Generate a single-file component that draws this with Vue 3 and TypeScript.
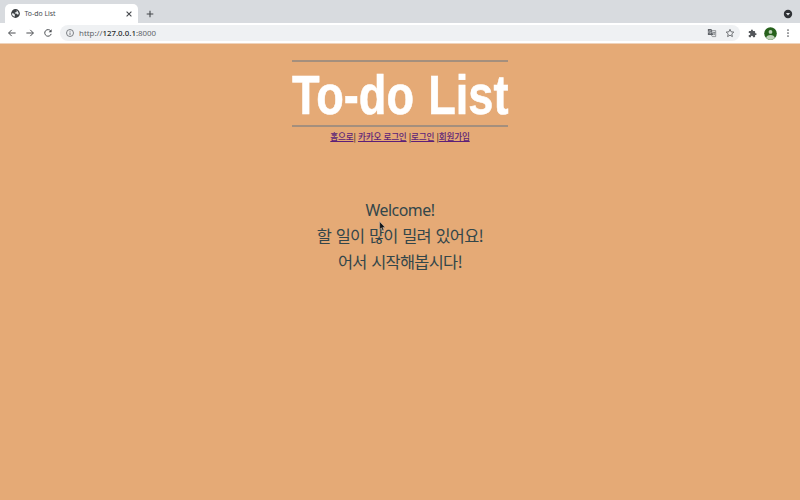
<script setup lang="ts">
interface NavLink {
  label: string
  separator: string
}

const address = { scheme: 'http://', host: '127.0.0.1', port: ':8000' }
const title = 'To-do List'
const links: NavLink[] = [
  { label: '홈으로', separator: '| ' },
  { label: '카카오 로그인', separator: ' |' },
  { label: '로그인', separator: ' |' },
  { label: '회원가입', separator: '' },
]
const messages: string[] = ['할 일이 많이 밀려 있어요!', '어서 시작해봅시다!']
</script>

<template>
  <div class="browser">
    <div class="tabs">
      <div class="tab">
        <svg class="globe" viewBox="0 0 16 16">
          <circle cx="8" cy="8" r="7.8" fill="#3c4043" />
          <path d="M1.5 7.5 5 8l2 2-.4 3.7C3.500 13 1.500 10.500 1.500 7.500zM9 2l1.500 1.600-1.200 2.200-2.500.3.2 1.700 2.500.1 1.500 1.800 2.900-.2C13.500 5.500 12 3 9 2z" fill="#eef0f2" />
        </svg>
        <span class="tab-title">{{ title }}</span>
        <svg class="close" viewBox="0 0 8 8"><path d="M1.600 1.600l4.800 4.800M6.400 1.600L1.600 6.400" /></svg>
      </div>
      <svg class="plus" viewBox="0 0 8 8"><path d="M4 .7v6.600M.7 4h6.600" /></svg>
      <svg class="tab-search" viewBox="0 0 10 10">
        <circle cx="5" cy="5" r="4.200" fill="#303236" />
        <path d="M2.900 3.900h4.200L5 6.500z" fill="#e5e7e9" />
      </svg>
    </div>

    <div class="toolbar">
      <svg class="nav-icon" viewBox="0 0 10 10"><path d="M8.600 5H1.700M4.700 1.900L1.600 5l3.100 3.100" /></svg>
      <svg class="nav-icon" viewBox="0 0 10 10"><path d="M1.400 5h6.900M5.300 1.900L8.400 5 5.300 8.100" /></svg>
      <svg class="nav-icon" viewBox="0 0 10 10">
        <path d="M7.800 3.100A3.300 3.300 0 1 0 8.200 5.900" />
        <path class="arrowhead" d="M8.600 1.200v3H5.600z" />
      </svg>
      <div class="address">
        <svg class="info" viewBox="0 0 10 10"><circle cx="5" cy="5" r="3.500" /><path d="M5 4.500V7M5 2.900v.8" /></svg>
        <span class="url">{{ address.scheme }}<b>{{ address.host }}</b>{{ address.port }}</span>
        <svg class="translate" viewBox="0 0 10 10">
          <path d="M4.400 2.600h4.300v6H5.300L4.400 7z" fill="#e8eaec" stroke="#74777b" stroke-width=".7" />
          <path d="M.9 1h3.600l1.700 6H.9z" fill="#5f6368" />
          <path d="M4.100 3.200A1.300 1.300 0 1 0 4.300 4.300H3" fill="none" stroke="#dadde0" stroke-width=".6" />
          <path d="M6 4.500h2.200M7.100 3.900v.6M7.900 4.500L6.500 7M6.400 5.400l1.500 1.500" fill="none" stroke="#66696d" stroke-width=".6" />
        </svg>
        <svg class="star" viewBox="0 0 10 10"><path d="M5 1.300l1.100 2.500 2.700.3-2 1.800.6 2.700L5 7.200 2.600 8.600l.6-2.700-2-1.800 2.700-.3z" /></svg>
      </div>
      <svg class="puzzle" viewBox="0 0 24 24">
        <path d="M20.500 11H19V7a2 2 0 0 0-2-2h-4V3.500a2.500 2.500 0 0 0-5 0V5H4a2 2 0 0 0-2 2v3.800h1.500a2.700 2.700 0 0 1 0 5.400H2V20a2 2 0 0 0 2 2h3.800v-1.500a2.700 2.700 0 0 1 5.400 0V22H17a2 2 0 0 0 2-2v-4h1.500a2.500 2.500 0 0 0 0-5z" />
      </svg>
      <svg class="avatar" viewBox="0 0 13 13">
        <circle cx="6.500" cy="6.500" r="6.300" fill="#27611c" />
        <circle cx="6.500" cy="4.900" r="1.900" fill="#bed1b8" />
        <path d="M2.200 10.900c0-4 8.600-4 8.600 0a6.200 6.200 0 0 1-8.600 0z" fill="#bed1b8" />
      </svg>
      <svg class="more" viewBox="0 0 4 10"><circle cx="2" cy="2" r=".85" /><circle cx="2" cy="5" r=".85" /><circle cx="2" cy="8" r=".85" /></svg>
    </div>

    <main class="page">
      <h1 class="heading">
        <svg viewBox="0 0 216 63">
          <text x="0" y="52.300" textLength="216.500" lengthAdjust="spacingAndGlyphs">{{ title }}</text>
        </svg>
      </h1>
      <nav class="links">
        <template v-for="link in links" :key="link.label"><a href="#">{{ link.label }}</a><span>{{ link.separator }}</span></template>
      </nav>
      <section class="welcome">
        <p class="greeting">Welcome!</p>
        <p v-for="message in messages" :key="message">{{ message }}</p>
      </section>
      <svg class="cursor" viewBox="0 0 7 11">
        <path d="M.6.600v8l1.800-1.700 1.200 2.900 1.400-.6-1.200-2.800h2.400z" fill="#111417" stroke="#d9c9bb" stroke-width=".5" />
      </svg>
    </main>
  </div>
</template>

<style>
body {
  margin: 0;
}
</style>

<style scoped>
.browser {
  position: relative;
  width: 800px;
  height: 500px;
  overflow: hidden;
  display: flex;
  flex-direction: column;
  background: #e5aa76;
  font-family: "Liberation Sans", "Noto Sans CJK KR", sans-serif;
}
svg {
  display: block;
  flex: none;
}
.tabs {
  height: 23px;
  flex: none;
  display: flex;
  align-items: center;
  box-sizing: border-box;
  padding: 4px 7px 0 5px;
  background: #d8dbdf;
}
.tab {
  width: 133px;
  height: 19px;
  box-sizing: border-box;
  display: flex;
  align-items: center;
  padding: 0 5px 0 6px;
  border-radius: 5px 5px 0 0;
  background: #fff;
}
.globe {
  width: 9px;
  height: 9px;
}
.tab-title {
  flex: 1;
  margin-left: 4.500px;
  font: 6.900px "Noto Sans", sans-serif;
  color: #45494d;
}
.close {
  width: 8px;
  height: 8px;
}
.close path,
.plus path {
  fill: none;
  stroke: #44474b;
  stroke-width: 1.100;
}
.plus {
  width: 8px;
  height: 8px;
  margin-left: 8px;
}
.tab-search {
  width: 10px;
  height: 10px;
  margin-left: auto;
}
.toolbar {
  height: 21px;
  flex: none;
  display: flex;
  align-items: center;
  box-sizing: border-box;
  padding: 0 10px 0 7px;
  background: #fff;
  border-bottom: 1px solid #efd3bb;
}
.nav-icon {
  width: 10px;
  height: 10px;
  margin-right: 8px;
}
.nav-icon path {
  fill: none;
  stroke: #4a4d51;
  stroke-width: 1;
}
.nav-icon .arrowhead {
  fill: #4a4d51;
  stroke: none;
}
.address {
  width: 680px;
  height: 16px;
  margin-left: -1px;
  box-sizing: border-box;
  display: flex;
  align-items: center;
  padding: 0 5px;
  border-radius: 8px;
  background: #eff1f3;
}
.info {
  width: 10px;
  height: 10px;
}
.info circle,
.info path {
  fill: none;
  stroke: #5f6368;
  stroke-width: .8;
}
.url {
  flex: 1;
  margin-left: 4px;
  font: 7.900px "Noto Sans", sans-serif;
  color: #606469;
}
.url b {
  font-weight: 500;
  color: #26292c;
}
.translate,
.star {
  width: 10px;
  height: 10px;
}
.star {
  margin-left: 8px;
}
.star path {
  fill: none;
  stroke: #54575b;
  stroke-width: .8;
}
.puzzle {
  width: 9px;
  height: 9px;
  margin-left: 8px;
  fill: #54575b;
}
.avatar {
  width: 13px;
  height: 13px;
  margin-left: 7px;
}
.more {
  width: 4px;
  height: 10px;
  margin-left: 9px;
  fill: #54575b;
}
.page {
  flex: 1;
  display: flex;
  flex-direction: column;
  align-items: center;
  padding-top: 16px;
}
.heading {
  width: 216px;
  margin: 0;
  border-top: 2px solid #a48f7d;
  border-bottom: 2px solid #a48f7d;
}
.heading svg {
  width: 216px;
  height: 63px;
  overflow: visible;
}
.heading text {
  font: bold 56px "Liberation Sans", sans-serif;
  word-spacing: 2px;
  fill: #fff;
  stroke: #fff;
  stroke-width: .6px;
}
.links {
  margin-top: 3px;
  font: 500 8.600px/13px "Noto Sans CJK KR", sans-serif;
  letter-spacing: -.18px;
  word-spacing: .5px;
  white-space: pre;
  color: #342a25;
}
.links a {
  color: #5c1f78;
  text-decoration: underline;
}
.welcome {
  margin-top: 55px;
  font: 16.400px/25.400px "Noto Sans CJK KR", sans-serif;
  letter-spacing: -.7px;
  word-spacing: 1.500px;
  color: #33464a;
  text-align: center;
}
.welcome p {
  margin: 0;
}
.welcome .greeting {
  font-family: "Noto Sans", sans-serif;
  font-size: 15.900px;
  letter-spacing: -.500px;
}
.cursor {
  position: absolute;
  left: 379px;
  top: 221px;
  width: 7px;
  height: 11px;
}
</style>
